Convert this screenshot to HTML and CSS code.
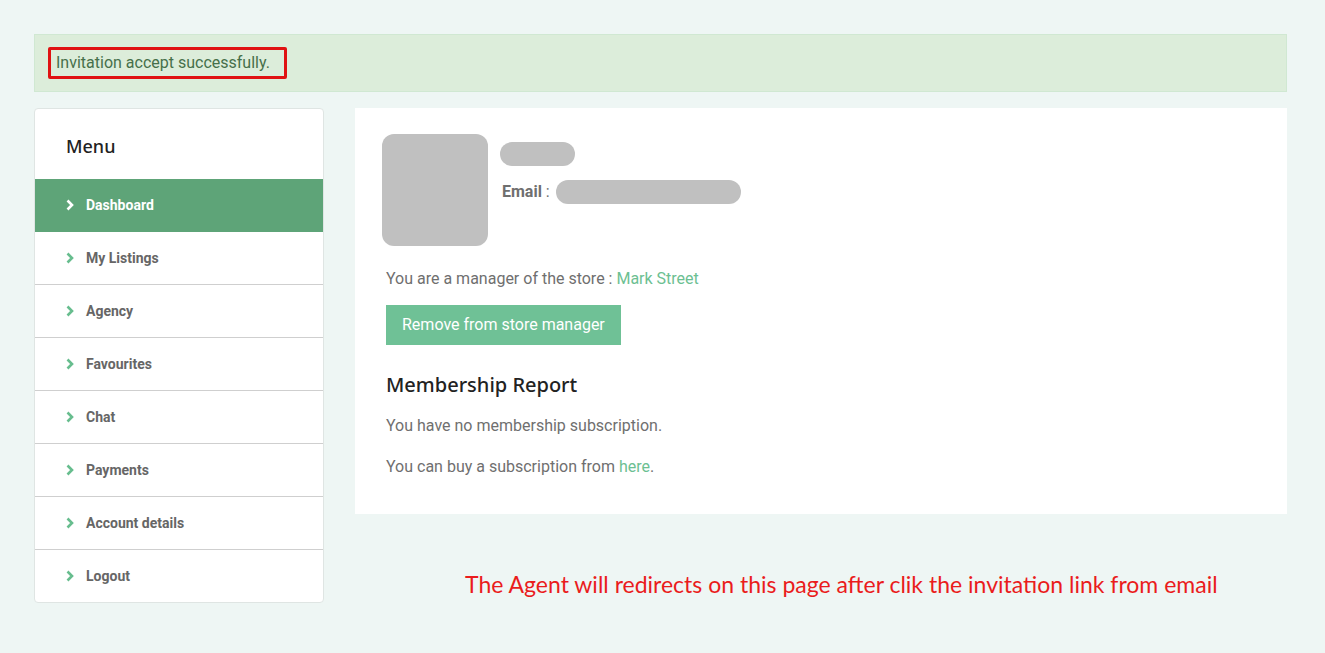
FILE: index.html
```html
<!DOCTYPE html>
<html lang="en">
<head>
<meta charset="utf-8">
<meta name="viewport" content="width=device-width, initial-scale=1">
<title>Dashboard</title>
<link rel="stylesheet" href="styles.css">
</head>
<body>
<div class="page">
  <div class="alert" role="status"><span class="alert-text">Invitation accept successfully.</span></div>
  <div class="columns">
    <nav class="menu" aria-label="Account">
      <h2 class="menu-title">Menu</h2>
      <ul class="menu-list">
        <li><a class="menu-link active" href="#"><svg class="chevron" viewBox="0 0 8 12"><path d="M1.500 1.500 6 6l-4.500 4.500"/></svg>Dashboard</a></li>
        <li><a class="menu-link" href="#"><svg class="chevron" viewBox="0 0 8 12"><path d="M1.500 1.500 6 6l-4.500 4.500"/></svg>My Listings</a></li>
        <li><a class="menu-link" href="#"><svg class="chevron" viewBox="0 0 8 12"><path d="M1.500 1.500 6 6l-4.500 4.500"/></svg>Agency</a></li>
        <li><a class="menu-link" href="#"><svg class="chevron" viewBox="0 0 8 12"><path d="M1.500 1.500 6 6l-4.500 4.500"/></svg>Favourites</a></li>
        <li><a class="menu-link" href="#"><svg class="chevron" viewBox="0 0 8 12"><path d="M1.500 1.500 6 6l-4.500 4.500"/></svg>Chat</a></li>
        <li><a class="menu-link" href="#"><svg class="chevron" viewBox="0 0 8 12"><path d="M1.500 1.500 6 6l-4.500 4.500"/></svg>Payments</a></li>
        <li><a class="menu-link" href="#"><svg class="chevron" viewBox="0 0 8 12"><path d="M1.500 1.500 6 6l-4.500 4.500"/></svg>Account details</a></li>
        <li><a class="menu-link" href="#"><svg class="chevron" viewBox="0 0 8 12"><path d="M1.500 1.500 6 6l-4.500 4.500"/></svg>Logout</a></li>
      </ul>
    </nav>
    <div class="content">
      <main class="panel">
        <div class="profile">
          <div class="avatar"></div>
          <div class="profile-info">
            <div class="name-mask"></div>
            <div class="email"><span><strong>Email</strong> :</span><span class="email-mask"></span></div>
          </div>
        </div>
        <p class="store">You are a manager of the store : <a class="link" href="#">Mark Street</a></p>
        <button class="remove" type="button">Remove from store manager</button>
        <h2 class="report-title">Membership Report</h2>
        <p class="report-text">You have no membership subscription.</p>
        <p class="report-text">You can buy a subscription from <a class="link" href="#">here</a>.</p>
      </main>
      <p class="note">The Agent will redirects on this page after clik the invitation link from email</p>
    </div>
  </div>
</div>
</body>
</html>
```
FILE: styles.css
```css
* { box-sizing: border-box; }
body {
  margin: 0;
  background: #eef6f4;
  color: #6f6f6f;
  font: 16px/26px Roboto, "Liberation Sans", sans-serif;
}
p, h2, ul { margin: 0; padding: 0; }
a { text-decoration: none; }
.page { padding: 34px 38px 50px 34px; }
.alert {
  display: flex;
  padding: 12px 13px;
  border: 1px solid #d0e8d2;
  background: #dcedda;
  color: #46704a;
}
.alert-text {
  padding: 0 14px 0 5px;
  border: 3px solid #e01212;
  border-radius: 2px;
}
.columns { display: flex; align-items: flex-start; gap: 31px; margin-top: 16px; }
.menu {
  flex: 0 0 290px;
  overflow: hidden;
  border: 1px solid #dfe5e3;
  border-radius: 4px;
  background: #fff;
}
.menu-title {
  padding: 24px 31px 20px;
  color: #222;
  font: 500 18px/26px "Noto Sans", sans-serif;
}
.menu-list { list-style: none; }
.menu-link {
  display: flex;
  align-items: center;
  gap: 12px;
  padding: 13px 31px;
  border-bottom: 1px solid #cfcfcf;
  color: #666;
  font-size: 14px;
  font-weight: 700;
}
.menu-list li:last-child .menu-link { border-bottom: 0; }
.menu-link.active { border-color: #5ea478; background: #5ea478; color: #fff; }
.chevron { width: 8px; height: 12px; fill: none; stroke: #67bd8e; stroke-width: 2.6; }
.active .chevron { stroke: #fff; }
.content { flex: 1; min-width: 0; }
.panel { padding: 26px 31px 34px; background: #fff; }
.profile { display: flex; gap: 12px; margin-left: -4px; }
.avatar { width: 106px; height: 112px; border-radius: 12px; background: #c0c0c0; }
.profile-info { padding-top: 8px; }
.name-mask { width: 75px; height: 24px; border-radius: 12px; background: #c0c0c0; }
.email { display: flex; align-items: center; gap: 6px; margin-top: 13px; padding-left: 2px; }
.email-mask { width: 185px; height: 24px; border-radius: 12px; background: #c0c0c0; }
.store { margin-top: 20px; }
.link { color: #6cc092; }
.remove {
  display: block;
  margin-top: 13px;
  padding: 7px 16px;
  border: 0;
  background: #6fc196;
  color: #fff;
  font: inherit;
}
.report-title {
  margin: 26px 0 14px;
  color: #222;
  font: 500 20px/28px "Noto Sans", sans-serif;
}
.report-text + .report-text { margin-top: 15px; }
.note {
  margin: 55px 0 0 110px;
  color: #ea1c1c;
  font: 23px/30px Lato, "Open Sans", sans-serif;
}
```
